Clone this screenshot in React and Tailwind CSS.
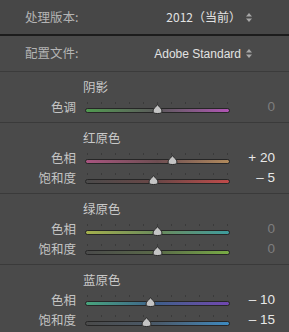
import React from "react";

const FONT = { fontFamily: '"Noto Sans CJK SC", "Liberation Sans", sans-serif' };

function UpDown() {
  return (
    <svg width="6" height="9" viewBox="0 0 6 9" className="ml-[5px] shrink-0">
      <path d="M3 0 L6 3.5 L0 3.5 Z" fill="#a8a8a8" />
      <path d="M0 5.5 L6 5.5 L3 9 Z" fill="#a8a8a8" />
    </svg>
  );
}

function Thumb() {
  return (
    <svg width="11" height="10" viewBox="0 0 11 10">
      <path
        d="M5.5 0.5 C6.5 2.5 10 4.5 10 7 C10 8.8 8.5 9.5 5.5 9.5 C2.5 9.5 1 8.8 1 7 C1 4.5 4.5 2.5 5.5 0.5 Z"
        fill="#c4c4c4"
        stroke="#2a2a2a"
        strokeWidth="1"
      />
    </svg>
  );
}

function Slider({ label, value, gradient }) {
  const pos = 72.5 + (value / 100) * 72.5;
  const text = value === 0 ? "0" : value > 0 ? `+ ${value}` : `– ${-value}`;
  return (
    <div className="flex h-[20px] items-center">
      <div className="w-[76px] text-right text-[12.5px] text-[#c4c4c4] leading-none">{label}</div>
      <div className="relative ml-[9px] h-[20px] w-[145px]">
        <div className="flex h-[20px] flex-col justify-center">
          <div className="flex justify-between px-[2px]">
            {Array.from({ length: 11 }).map((_, i) => (
              <div key={i} className="h-[2px] w-px bg-[#3a3a3a]" />
            ))}
          </div>
          <div className={`mt-[4px] h-[5px] w-full rounded-full border border-[#262626] ${gradient}`} />
        </div>
        <div className="absolute top-[7px]" style={{ left: `${pos - 5.5}px` }}>
          <Thumb />
        </div>
      </div>
      <div
        className={`flex-1 pr-[14px] text-right text-[13.5px] leading-none ${
          value === 0 ? "text-[#7e7e7e]" : "text-[#e8e8e8]"
        }`}
        style={{ fontFamily: '"Liberation Sans", sans-serif' }}
      >
        {text}
      </div>
    </div>
  );
}

function Section({ title, children, first }) {
  return (
    <div className={`pt-[5px] pb-[5px] ${first ? "" : "border-t border-[#3a3a3a]"}`}>
      <div className="flex h-[20px] items-center pl-[83px] text-[12.5px] leading-none text-[#c8c8c8]">{title}</div>
      {children}
    </div>
  );
}

export default function App() {
  return (
    <div className="h-[332px] w-[289px] overflow-hidden bg-[#4a4a4a]" style={FONT}>
      <div className="flex h-[34px] items-center justify-between bg-[#474747] pl-[25px] pr-[37px]">
        <span className="text-[12.5px] text-[#b4b4b4]">处理版本:</span>
        <span className="flex items-center text-[12px] text-[#e2e2e2]">
          2012（当前）
          <UpDown />
        </span>
      </div>
      <div className="h-[2px] bg-[#1c1c1c]" />
      <div className="flex h-[35px] items-center justify-between pl-[25px] pr-[37px]">
        <span className="text-[12.5px] text-[#b4b4b4]">配置文件:</span>
        <span className="flex items-center text-[12px] text-[#e2e2e2]" style={{ fontFamily: '"Liberation Sans", sans-serif' }}>
          Adobe Standard
          <UpDown />
        </span>
      </div>
      <div className="border-t border-[#3b3b3b]">
        <Section title="阴影" first>
          <Slider label="色调" value={0} gradient="bg-linear-to-r from-[#4e9a4e] via-[#5a585a] to-[#b054b4]" />
        </Section>
        <Section title="红原色">
          <Slider label="色相" value={20} gradient="bg-linear-to-r from-[#a85480] via-[#6e4e52] to-[#b08a5c]" />
          <Slider label="饱和度" value={-5} gradient="bg-linear-to-r from-[#4a4a4a] via-[#6a4646] to-[#c04a4a]" />
        </Section>
        <Section title="绿原色">
          <Slider label="色相" value={0} gradient="bg-linear-to-r from-[#a4b04c] via-[#6a8a5a] to-[#3c9c9c]" />
          <Slider label="饱和度" value={0} gradient="bg-linear-to-r from-[#4a4a4a] via-[#5a6a48] to-[#78ac44]" />
        </Section>
        <Section title="蓝原色">
          <Slider label="色相" value={-10} gradient="bg-linear-to-r from-[#48a47c] via-[#3e5e8a] to-[#7046b0]" />
          <Slider label="饱和度" value={-15} gradient="bg-linear-to-r from-[#4a4a4a] via-[#4a5a6a] to-[#3c8ac0]" />
        </Section>
      </div>
    </div>
  );
}
